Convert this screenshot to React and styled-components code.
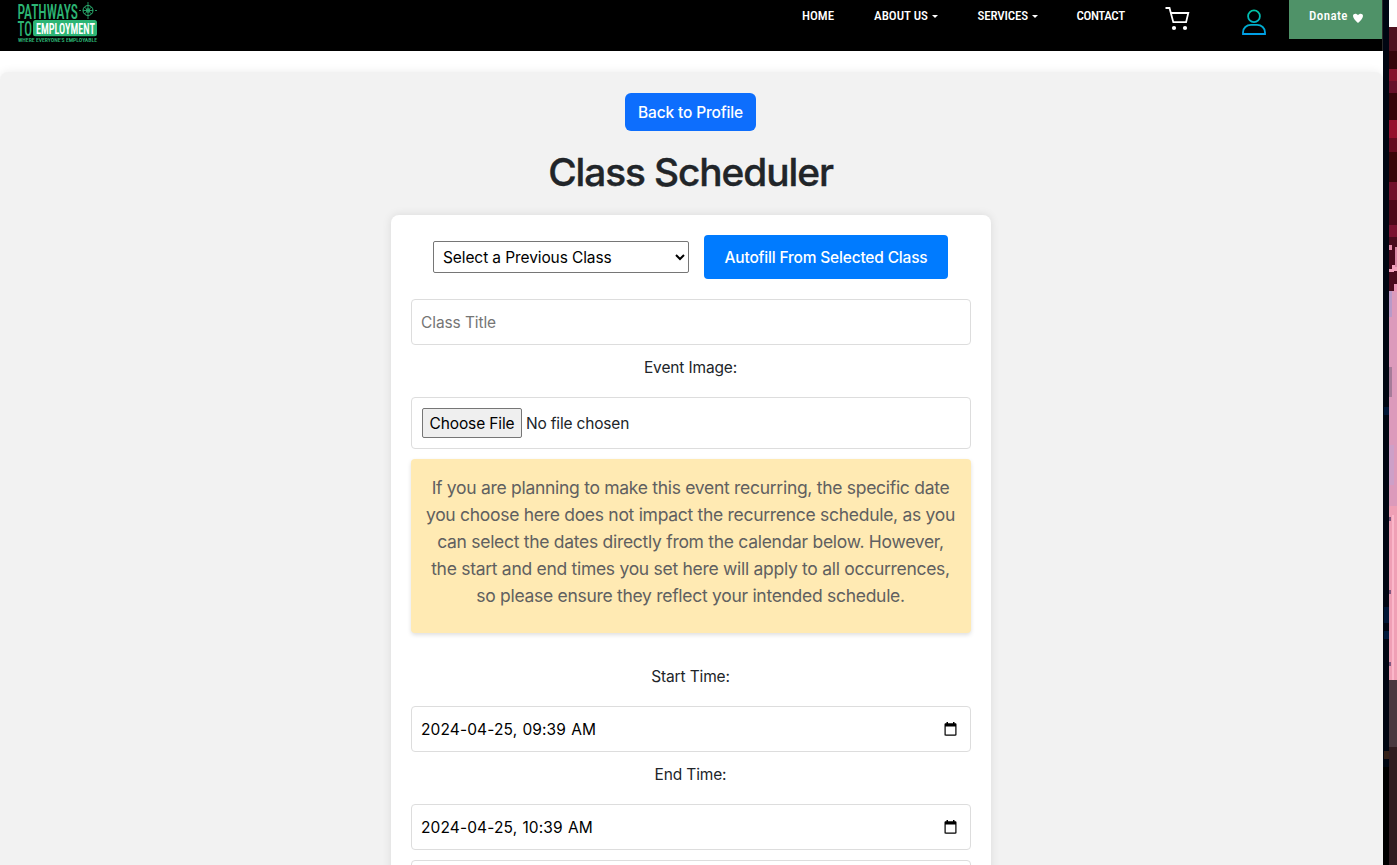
import React from 'react';
import styled, { createGlobalStyle } from 'styled-components';

const GlobalStyle = createGlobalStyle`
  *, *::before, *::after { box-sizing: border-box; }
  html, body { margin: 0; height: 865px; overflow: hidden; }
  body {
    font-family: Inter, "Liberation Sans", sans-serif;
    font-size: 15.5px;
    letter-spacing: -0.14px;
    line-height: 24px;
    color: #212529;
    background: #fff;
  }
`;

const Screen = styled.div`
  display: flex;
  height: 865px;
  overflow: hidden;
`;

const Page = styled.div`
  display: flex;
  flex-direction: column;
  width: 1383px;
  flex: none;
  overflow: hidden;
`;

const Header = styled.header`
  display: flex;
  align-items: flex-start;
  justify-content: space-between;
  height: 51px;
  flex: none;
  padding-left: 14px;
  background: #000;
  border-right: 1px solid #2b2b2b;
`;

const Nav = styled.nav`
  display: flex;
  align-items: flex-start;
  font: 500 13px/32px Roboto, sans-serif;
  font-stretch: 75%;
  letter-spacing: 0;
  color: #fff;
`;

const NavItem = styled.a`
  display: flex;
  align-items: center;
  gap: 4px;
  width: ${(p) => p.$width}px;
  height: 32px;
  padding-left: 20px;
  white-space: nowrap;
  letter-spacing: ${(p) => p.$tracking || 0}px;
`;

const Caret = styled.i`
  border: 3px solid transparent;
  border-top-color: #fff;
  border-bottom: 0;
`;

const IconLink = styled.a`
  display: flex;
  width: ${(p) => p.$width}px;
  padding-top: ${(p) => p.$top}px;
  padding-left: 20px;
`;

const DonateButton = styled.a`
  display: flex;
  gap: 5px;
  width: 93px;
  height: 39px;
  padding-left: 20px;
  background: #4f9268;
  letter-spacing: 0.4px;
  svg { margin-top: 13px; }
`;

const Content = styled.main`
  display: flex;
  flex-direction: column;
  align-items: center;
  height: 900px;
  flex: none;
  margin-top: 21px;
  padding: 21px 2px 0 0;
  background: #f2f2f2;
  border-radius: 8px;
  box-shadow: 0 0 10px rgba(0, 0, 0, 0.08);
`;

const BackButton = styled.button`
  width: 131px;
  height: 38px;
  flex: none;
  padding: 2px 0 0;
  border: 0;
  border-radius: 6px;
  background: #0d6efd;
  color: #fff;
  font: inherit;
  font-weight: 500;
  letter-spacing: -0.14px;
`;

const Title = styled.h1`
  margin: 17px 0 19px;
  font-size: 38.8px;
  line-height: 48px;
  font-weight: 500;
  -webkit-text-stroke: 0.4px currentColor;
  letter-spacing: -1.08px;
`;

const Card = styled.form`
  display: flex;
  flex-direction: column;
  width: 600px;
  height: 800px;
  flex: none;
  margin-left: 1px;
  padding: 20px;
  background: #fff;
  border-radius: 8px;
  box-shadow: 0 0 10px rgba(0, 0, 0, 0.1);
`;

const AutofillRow = styled.div`
  display: flex;
  align-items: center;
  justify-content: center;
  gap: 15px;
  height: 44px;
  margin-bottom: 20px;
  padding-right: 1px;
`;

const ClassSelect = styled.select`
  width: 256px;
  height: 32px;
  padding: 0 0 0 5px;
  border: 1px solid #767676;
  border-radius: 2px;
  background: #fff;
  color: #000;
  font: inherit;
  letter-spacing: -0.1px;
`;

const AutofillButton = styled.button`
  width: 244px;
  height: 44px;
  padding: 2px 0 0;
  border: 0;
  border-radius: 4px;
  background: #007bff;
  color: #fff;
  font: inherit;
  font-weight: 500;
  letter-spacing: -0.18px;
`;

const Field = styled.div`
  display: flex;
  align-items: center;
  width: 560px;
  height: ${(p) => p.$height || 46}px;
  flex: none;
  padding: 0 13px 0 ${(p) => p.$inset || 9}px;
  border: 1px solid #ddd;
  border-radius: 4px;
`;

const TextInput = styled.input`
  flex: 1;
  min-width: 0;
  padding: 2px 0 0;
  border: 0;
  outline: 0;
  color: #000;
  background: transparent;
  font: inherit;
  letter-spacing: ${(p) => p.$tracking || -0.1}px;
  word-spacing: ${(p) => p.$wordGap || 0}px;
  &::placeholder { color: #757575; }
`;

const FileInput = styled.input`
  flex: 1;
  height: 30px;
  font: inherit;
  line-height: 32px;
  letter-spacing: -0.18px;
  &::file-selector-button {
    width: 100px;
    height: 30px;
    margin: 0 4px 0 0;
    padding: 2px 0 0;
    border: 1px solid #767676;
    border-radius: 2px;
    background: #efefef;
    color: #000;
    font: inherit;
    line-height: 24px;
    letter-spacing: -0.12px;
  }
`;

const Label = styled.label`
  height: 24px;
  flex: none;
  margin: 11px 0 17px;
  padding-right: 1px;
  text-align: center;
`;

const Notice = styled.div`
  height: 174px;
  flex: none;
  margin: 10px 0 21px;
  padding: 15px 1px 0 0;
  border-radius: 4px;
  background: #ffeab3;
  box-shadow: 0 2px 4px rgba(0, 0, 0, 0.13);
  color: #606060;
  font-size: 17.5px;
  line-height: 27px;
  letter-spacing: -0.29px;
  text-align: center;
  white-space: pre-line;
`;

const NextField = styled(Field)`
  margin-top: 10px;
`;

const CalendarGlyph = styled.svg`
  flex: none;
  margin-bottom: 1px;
`;

const Desktop = styled.aside`
  width: 14px;
  flex: none;
  svg { display: block; }
`;

const LogoMark = styled.svg`
  font-family: Roboto, sans-serif;
  font-stretch: 75%;
  letter-spacing: 0;
`;

function Logo() {
  return (
    <LogoMark width="88" height="46" viewBox="14 0 88 46">
      <g fill="#2cb574">
        <text x="17.5" y="18.5" fontSize="19.5" fontWeight="500" textLength="60.5" lengthAdjust="spacingAndGlyphs">PATHWAYS</text>
        <text x="17.5" y="35.5" fontSize="19.5" fontWeight="500" textLength="14.5" lengthAdjust="spacingAndGlyphs">TO</text>
        <rect x="33" y="20" width="64" height="16.3" rx="2.5" />
        <text x="18" y="41.7" fontSize="5.2" fontWeight="600" textLength="79" lengthAdjust="spacingAndGlyphs">WHERE EVERYONE'S EMPLOYABLE</text>
      </g>
      <text x="36" y="34" fill="#fff" fontSize="15.5" fontWeight="600" textLength="59" lengthAdjust="spacingAndGlyphs">EMPLOYMENT</text>
      <g stroke="#2cb574" fill="none">
        <circle cx="88" cy="10.5" r="5" />
        <circle cx="88" cy="10.5" r="1.7" />
        <path d="M88 2v3M88 16v3M79 10.5h2M95 10.5h2M84.500 7l7 7M91.500 7l-7 7M83 10.500h10M88 6v9" strokeWidth=".8" />
      </g>
    </LogoMark>
  );
}

function CartIcon() {
  return (
    <svg width="25" height="24" viewBox="0 0 25 24" fill="none" stroke="#fff" strokeWidth="1.8">
      <path d="M.5 1h4l3.800 14.200h12.800L23.300 6H6" />
      <circle cx="9" cy="21" r="2.100" fill="#fff" stroke="none" />
      <circle cx="20" cy="21" r="2.100" fill="#fff" stroke="none" />
    </svg>
  );
}

function UserIcon() {
  return (
    <svg width="24" height="26" viewBox="0 0 24 26" fill="none" stroke="url(#userTint)" strokeWidth="1.8">
      <defs>
        <linearGradient id="userTint" gradientUnits="userSpaceOnUse" x1="0" y1="0" x2="0" y2="26">
          <stop offset="0" stopColor="#00c8a0" />
          <stop offset="1" stopColor="#009ee8" />
        </linearGradient>
      </defs>
      <circle cx="12" cy="7.200" r="5.900" />
      <path d="M1 25v-1.600c0-4.500 3.500-7.500 8-7.500h6c4.500 0 8 3 8 7.500v1.600z" />
    </svg>
  );
}

function HeartIcon() {
  return (
    <svg width="10" height="10" viewBox="0 0 10 10" fill="#fff">
      <path d="M5 10C3 8 0 5.500 0 3 0 .3 3.500-.2 5 2.200 6.500-.2 10 .3 10 3c0 2.500-3 5-5 7z" />
    </svg>
  );
}

function CalendarIcon() {
  return (
    <CalendarGlyph width="13" height="14" viewBox="0 0 13 14">
      <path fill="#000" fillRule="evenodd" d="M2.500 0H4v1.200h5V0h1.500v1.200h.8c.8 0 1.200.4 1.200 1.200v10.100c0 .8-.4 1.200-1.200 1.200H1.700c-.8 0-1.200-.4-1.200-1.200V2.400c0-.8.4-1.200 1.200-1.200h.8zM1.700 4.500v8h9.600v-8z" />
    </CalendarGlyph>
  );
}

const wallpaper = [
  [0, 27, '#fff'], [27, 24, '#4e1220'], [51, 18, '#35040a'], [69, 12, '#84122b'], [81, 12, '#67102a'],
  [93, 27, '#35040a'], [120, 18, '#95102d'], [138, 14, '#650b20'], [152, 30, '#390509'], [182, 18, '#72102a'],
  [200, 25, '#4d0819'], [225, 12, '#7a1230'], [237, 54, '#4a0a1d'], [291, 215, '#dc9abb'],
  [506, 174, '#ef9fb5'], [680, 67, '#4a3840'], [747, 118, '#301b20'],
];

const details = [
  [6, 245, 3, 5, '#e58aa8'], [9, 265, 5, 6, '#f2a0bc'], [6, 269, 5, 3, '#f2a0bc'], [12, 247, 2, 20, '#d887a5'],
  [11, 284, 3, 8, '#e794b4'], [6, 291, 3, 26, '#b99ac8'], [6, 367, 3, 30, '#a67c99'], [6, 445, 5, 40, '#cda0c8'],
  [9, 515, 2, 165, '#fbb6c9'], [6, 517, 2, 4, '#80577f'], [6, 590, 2, 4, '#80577f'], [6, 662, 2, 4, '#80577f'],
  [1, 407, 5, 8, '#001636'], [1, 607, 5, 16, '#001636'], [1, 631, 5, 8, '#001a3c'], [1, 751, 5, 8, '#332018'],
];

function DesktopEdge() {
  return (
    <Desktop>
      <svg width="14" height="865" shapeRendering="crispEdges">
        <rect width="6" height="865" fill="#000612" />
        <rect y="767" width="6" height="98" fill="#000" />
        {wallpaper.map(([y, h, fill]) => <rect key={y} x="6" y={y} width="8" height={h} fill={fill} />)}
        {details.map(([x, y, w, h, fill]) => <rect key={`${x}-${y}`} x={x} y={y} width={w} height={h} fill={fill} />)}
      </svg>
    </Desktop>
  );
}

function DateField({ value }) {
  return (
    <Field>
      <TextInput defaultValue={value} $tracking={0.12} $wordGap={0.7} />
      <CalendarIcon />
    </Field>
  );
}

export default function App() {
  return (
    <Screen>
      <GlobalStyle />
      <Page>
        <Header>
          <Logo />
          <Nav>
            <NavItem $width={72}>HOME</NavItem>
            <NavItem $width={103.5}>ABOUT US<Caret /></NavItem>
            <NavItem $width={99} $tracking={-0.15}>SERVICES<Caret /></NavItem>
            <NavItem $width={88.5} $tracking={-0.4}>CONTACT</NavItem>
            <IconLink $width={77} $top={7}><CartIcon /></IconLink>
            <IconLink $width={67} $top={9}><UserIcon /></IconLink>
            <DonateButton>Donate<HeartIcon /></DonateButton>
          </Nav>
        </Header>
        <Content>
          <BackButton>Back to Profile</BackButton>
          <Title>Class Scheduler</Title>
          <Card>
            <AutofillRow>
              <ClassSelect><option>Select a Previous Class</option></ClassSelect>
              <AutofillButton type="button">Autofill From Selected Class</AutofillButton>
            </AutofillRow>
            <Field><TextInput placeholder="Class Title" /></Field>
            <Label>Event Image:</Label>
            <Field $height={52} $inset={10}><FileInput type="file" /></Field>
            <Notice>
              {`If you are planning to make this event recurring, the specific date
              you choose here does not impact the recurrence schedule, as you
              can select the dates directly from the calendar below. However,
              the start and end times you set here will apply to all occurrences,
              so please ensure they reflect your intended schedule.`}
            </Notice>
            <Label>Start Time:</Label>
            <DateField value="2024-04-25, 09:39 AM" />
            <Label>End Time:</Label>
            <DateField value="2024-04-25, 10:39 AM" />
            <NextField />
          </Card>
        </Content>
      </Page>
      <DesktopEdge />
    </Screen>
  );
}
